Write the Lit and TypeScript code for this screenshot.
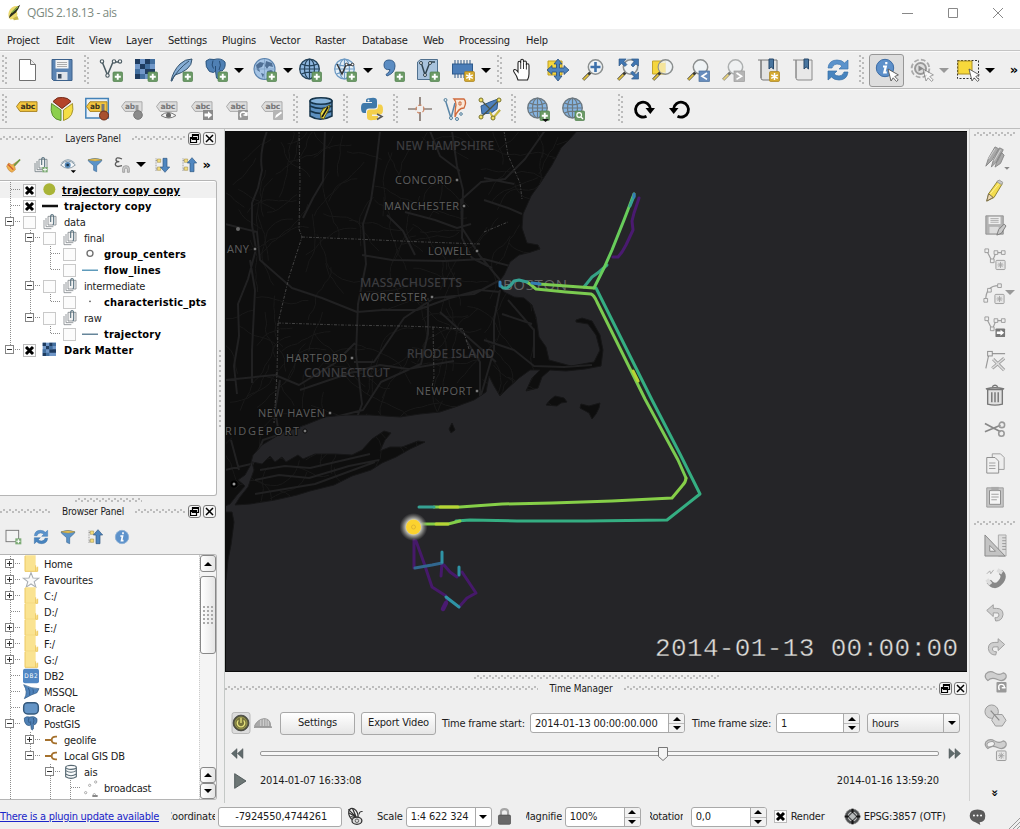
import { LitElement, html, svg, css, nothing } from "lit";
import { customElement, property } from "lit/decorators.js";

/* ---------- icon library: every glyph is drawn on a 24 x 24 grid ---------- */

const plus = svg`<rect x="14" y="14" width="9.5" height="9.5" rx="1" fill="#6b9a66" stroke="#4f7f4c" stroke-width=".7"/><path d="M18.75 15.7v6M15.8 18.75h6" stroke="#fff" stroke-width="1.9"/>`;
const star = svg`<rect x="13.5" y="13.5" width="10" height="10" rx="1.2" fill="#d4a92f" stroke="#a67f1d" stroke-width=".7"/><path d="M18.5 15v7M15.2 16.8l6.6 3.6M15.2 20.3l6.6-3.5" stroke="#fff" stroke-width="1.5"/>`;
const greyStar = svg`<rect x="13" y="13.5" width="10" height="10" rx="1" fill="#e6e6e6" stroke="#9a9a9a"/><path d="M18 15.2v6.6M14.8 18.5h6.4M15.7 16.2l4.6 4.6M20.3 16.2l-4.6 4.6" stroke="#a5a5a5" stroke-width="1"/>`;
const lens = svg`<path d="M9.6 14.2l-7.4 7.6" stroke="#3a3a32" stroke-width="3"/><path d="M7.4 16.6l-5 5" stroke="#e2c243" stroke-width="1.8"/><circle cx="14.5" cy="9" r="7.2" fill="#eef3f6" fill-opacity=".85" stroke="#8b8f8f" stroke-width="1.5"/>`;
const cursor = svg`<path d="M13 11l3 12 2.2-3.2 3.4 3.7 1.6-1.6-3.4-3.4 3.6-1.6z" fill="#fff" stroke="#555" stroke-width=".9"/>`;
const globe = (fill: string, line: string) => svg`<circle cx="11.5" cy="11" r="9.8" fill="${fill}" stroke="${line}" stroke-width="1.3"/><path d="M1.7 11h19.6M11.5 1.2v19.6M3.4 6q8 3.6 16.2 0M3.4 16q8-3.6 16.2 0" stroke="${line}" fill="none" stroke-width="1.2"/><ellipse cx="11.5" cy="11" rx="5" ry="9.8" stroke="${line}" fill="none" stroke-width="1.2"/>`;
const tag = (fill: string, line: string) => svg`<path d="M1.5 9.5L5 4.8h17v9.6H5z" fill="${fill}" stroke="${line}"/>`;
const abc = (x: number, s: string, c: string, y = 12.4) => svg`<text x="${x}" y="${y}" font-size="7.6" font-weight="700" font-family="DejaVu Sans" textLength="${s.length * 4.9}" lengthAdjust="spacingAndGlyphs" fill="${c}">${s}</text>`;
const vee = (c: string) => svg`<path d="M3 3.5L8.5 17 14 4h6" stroke="${c}" stroke-width="1.5" fill="none"/><g fill="#f5f5f5" stroke="${c}" stroke-width="1.1"><circle cx="3" cy="3.4" r="1.7"/><circle cx="8.5" cy="17.5" r="1.7"/><circle cx="15" cy="3.4" r="1.7"/><circle cx="21" cy="3.4" r="1.7"/></g>`;
const elephant = svg`<path d="M2 3q3-3 8-1.5Q17-.5 21 4q1 6-3 9l-2-.5-.5 7q-1.3 2.5-3 .5l-1-7-2 1.5-4-1Q1 9 2 3z" fill="#4f80b4" stroke="#2d567f"/><path d="M9 2.5q-2 5 .5 8M15.5 3q2 4-.5 9M11.5 8v5" stroke="#264c74" stroke-width="1" fill="none"/>`;
const pages = (c: string) => svg`<path d="M3 9v13h11M6 6v13h11" fill="none" stroke="${c}" stroke-width="1.2"/><path d="M9 3.5h12v13H9z" fill="#f2f2f2" stroke="${c}" stroke-width="1.2"/><path d="M13 12V4q0-3 2.200-3T17.500 4v10q0 2-1.500 2" fill="none" stroke="#5a7380" stroke-width="1.7"/>`;
const sync = svg`<path d="M2 10Q3 2 11 2q5 0 7.500 3L22 2v9h-9l3-3Q14 6 11 6 7 6 6 10z" fill="#5b93cc" stroke="#3d76ae" stroke-width=".7"/><path d="M22 14q-1 8-9 8-5 0-7.500-3L2 22v-9h9l-3 3q2 2 5 2 4 0 5-4z" fill="#4784bf" stroke="#356da3" stroke-width=".7"/>`;
const tiles = svg`<rect x="1" y="1" width="20" height="20" fill="#7097c8"/><path d="M1 1h5v5H1zM11 1h5v5h-5zM6 6h5v5H6zM16 11h5v5h-5zM1 16h5v5H1zM11 11h5v5h-5z" fill="#1f3c60"/><path d="M16 1h5v5h-5zM11 6h5v5h-5zM6 16h5v5H6zM1 11h5v5H1z" fill="#426f9f"/>`;
const funnel = svg`<path d="M2 4q10-3.500 20 0v2l-7.500 7v9l-4.500-2v-7L2 6z" fill="#5b93c8" stroke="#3a6a98"/><path d="M2 4.300q10-3.500 20 0-10 3.500-20 0z" fill="#e9c65a" stroke="#a8893a" stroke-width=".8"/>`;
const blob = svg`<path d="M2 4q4-4 9-1t9 0q4 1 3 5-3 5-9 2T4 11Q0 8 2 4z" fill="#cfcfcf" stroke="#9c9c9c" stroke-width="1.200"/>`;
const treeArrow = (up: boolean) => svg`<path d="M3 2v19M3 5h4M3 18h4" stroke="#777" fill="none" stroke-dasharray="1.500 1"/><path d="M5 3h5v5H5zM5 15h5v5H5z" fill="#f3dd7b" stroke="#9d8a45" stroke-width=".8"/><path d="${up ? "M16.500 1l7 8h-4V22h-6V9h-4z" : "M16.500 23l7-8h-4V2h-6v13h-4z"}" fill="#4f86bf" stroke="#2d5680"/>`;

const ICONS: Record<string, unknown> = {
  new: svg`<path d="M4.500 1.500h11l5 5v16h-16z" fill="#fff" stroke="#6f6f6f"/><path d="M15.500 1.500v5h5" fill="#eee" stroke="#6f6f6f"/>`,
  save: svg`<path d="M2 1.500h20v21H3.500L2 21z" fill="#5b84b3" stroke="#3c618b"/><path d="M5.500 2h13v8.500h-13z" fill="#f4f4f4"/><path d="M7 4.500h10M7 6.500h10M7 8.500h10" stroke="#999" stroke-width=".8"/><path d="M6.500 14h11v8h-11z" fill="#dfe4ea"/><path d="M8 16h3.500v4.500H8z" fill="#3b4c60"/>`,
  vector: svg`${vee("#4b5b62")}${plus}`,
  raster: svg`${tiles}${plus}`,
  feather: svg`<path d="M2 23Q4 13 11 6q5-5 12-5 0 6-5 10T6 17q-2 2-3 6z" fill="#86add4" stroke="#35536e"/><path d="M3 22Q9 11 20 3" stroke="#35536e" fill="none"/>${plus}`,
  pg: svg`${elephant}${plus}`,
  wms: svg`<circle cx="11.500" cy="11" r="10.500" fill="#a5c4e5" stroke="#5a82ad" stroke-width="1.200"/><path d="M3 7l4-3 4 1-2 4-3 1 1 4-3-2zM13 3l6 2 1 4-4-1-2 3-2-3zM14 13l4-1 2 1-3 5-2-1zM8 15l3 1-1 4z" fill="#4f6f95"/><path d="M1.500 11h20M11.500 1v20" stroke="#7fa2c7" stroke-width=".8"/>${plus}`,
  wcs: svg`${globe("#8fb7df", "#24425a")}${plus}`,
  wfs: svg`${globe("#e6f0f8", "#6f9bc4")}<path d="M4 6l5 10 4-9h7" stroke="#333" stroke-width="1.400" fill="none"/><circle cx="13.500" cy="6.500" r="1.300" fill="#fff" stroke="#333"/><circle cx="19.500" cy="6.500" r="1.300" fill="#fff" stroke="#333"/>${plus}`,
  comma: svg`<path d="M3 7q0-5 5-5 6 0 6 6 0 7-8 10l-1-1.500q4-2.500 4-5-6 1-6-4.500z" fill="#5b8cc2" stroke="#335c8b"/>${plus}`,
  virtual: svg`<path d="M1.500 4l3-2.500h17v17l-2 3h-18z" fill="#a9c3dd" stroke="#50708e"/><path d="M5 4l4 13 5-13h5" fill="none" stroke="#31444f" stroke-width="1.500"/><circle cx="5" cy="5" r="1.500" fill="#eee" stroke="#31444f"/><circle cx="9" cy="17" r="1.500" fill="#eee" stroke="#31444f"/><circle cx="14" cy="5" r="1.500" fill="#eee" stroke="#31444f"/>${plus}`,
  memory: svg`<path d="M4 2v18M7 2v18M10 2v18M13 2v18M16 2v18M19 2v18" stroke="#5c7a9c" stroke-width="1.300"/><rect x="1.500" y="6" width="20" height="10" fill="#4b7db8" stroke="#2e5a8c"/>${star}`,
  hand: svg`<path d="M7 22q-1-4-4-8-1-2 .5-2.500T7 14V5q0-1.700 1.300-1.700T9.700 5V3q0-1.700 1.400-1.700T12.500 3v1.500Q12.500 3 14 3t1.400 2v2q0-1.300 1.300-1.300T18 7.500V16q0 3-1.500 6z" fill="#fff" stroke="#222" stroke-width="1.100"/><path d="M9.700 5v6M12.500 4.500v6.500M15.400 6v5.500" stroke="#222" stroke-width=".9"/>`,
  pan: svg`<path d="M2 3h14v14H2z" fill="#f5d63d" stroke="#c09e22"/><path d="M12 1l4 5h-2.500v4H18V7.500l5 4.500-5 4.500V14h-4.500v4H16l-4 5-4-5h2.500v-4H6v2.500L1 12l5-4.500V10h4.500V6H8z" fill="#4e83bd" stroke="#284f7c" stroke-width=".8"/>`,
  zoomIn: svg`${lens}<path d="M14.500 4v10M9.500 9h10" stroke="#3c70ab" stroke-width="2.600"/>`,
  zoomFull: svg`<path d="M3 1h19v20h-6" fill="none" stroke="#d9e4ee" stroke-width="2"/>${lens}<path d="M3 1h7L8 3.500l3 3-2 2-3.500-3L3 8zM22.500 1v7L20 6l-3 3-2-2 3-3.500L15.500 1zM22.500 21h-7l2.500-2.500-3.500-3.500 2-2 3.500 3.500 2.500-2.500z" fill="#3f76b1" stroke="#2b527c" stroke-width=".6"/>`,
  zoomSel: svg`<path d="M1.500 3h13v13h-13z" fill="#f5d63d" stroke="#c4a42b"/>${lens}<path d="M9 5h5.500v9.500H10q-4-4-1-9.500z" fill="#f5e59c"/>`,
  zoomLast: svg`${lens}<rect x="13" y="13" width="10.500" height="10.500" fill="#688dbd" stroke="#4a6f9c" stroke-width=".7"/><path d="M21 15l-5 3.200 5 3.200" fill="none" stroke="#fff" stroke-width="1.700"/>`,
  zoomNext: svg`<g opacity=".65">${lens}</g><rect x="13" y="13" width="10.500" height="10.500" fill="#b5b5b5" stroke="#999" stroke-width=".7"/><path d="M15.500 15l5 3.200-5 3.200" fill="none" stroke="#fff" stroke-width="1.700"/>`,
  bookNew: svg`<path d="M2 2h3v18q0 2 2 2h14V2H5" fill="#e3e3e3" stroke="#777"/><path d="M5 20V2" stroke="#777"/><path d="M13 1h4.500v10L15.200 9 13 11z" fill="#49759f" stroke="#28496b"/>${star}`,
  book: svg`<path d="M2 2h3v18q0 2 2 2h14V2H5" fill="#e8e8e8" stroke="#8a8a8a"/><path d="M5 20V2" stroke="#8a8a8a"/><path d="M13 1h4.500v10L15.200 9 13 11z" fill="#49759f" stroke="#28496b"/>`,
  sync,
  identify: svg`<circle cx="10" cy="10" r="8.700" fill="#5d90ca" stroke="#3c6ca5"/><path d="M11.300 4v2.200M8 8.500h2.800l-1.500 6h2.500" stroke="#fff" stroke-width="2.200" fill="none"/>${cursor}`,
  action: svg`<circle cx="10.500" cy="10.500" r="8.500" fill="#e9e9e9" stroke="#aaa" stroke-width="2.600" stroke-dasharray="4.500 2.200"/><circle cx="10.500" cy="10.500" r="8" fill="#eee"/><circle cx="10.500" cy="10.500" r="5.500" fill="#ddd" stroke="#999" stroke-width="2"/><path d="M8.500 7.500v6l5-3z" fill="#888"/><g opacity=".6">${cursor}</g>`,
  select: svg`<rect x="1.500" y="2.500" width="21" height="18" fill="none" stroke="#333" stroke-dasharray="2 1.500"/><path d="M2 3h14v13H2z" fill="#f7d83b" stroke="#a88d25"/>${cursor}`,
  label: svg`${tag("#f3c63e", "#a98322")}${abc(5.500, "abc", "#3b3420")}`,
  pie: svg`<path d="M12 11.500L3 4.500Q7-.5 12.500.5 18 .5 21 4.500z" fill="#b4442a" stroke="#732b1a"/><path d="M11 13v10.500Q-1 22 1.500 6.500z" fill="#8ccf4d" stroke="#5c8e35"/><path d="M13.500 13v10.500Q25 20 22.500 6.500z" fill="#f5de45" stroke="#a6942f"/>`,
  labelPin: svg`<rect x=".8" y="1.500" width="22.500" height="19.500" fill="#ecf2f8" stroke="#4382b8" stroke-width="1.500"/>${tag("#f3c63e", "#a98322")}${abc(5, "ab", "#3b3420")}<path d="M18 7v9" stroke="#777" stroke-width="3"/><circle cx="19" cy="18.500" r="4.500" fill="#a8502e" stroke="#6d2f18"/>`,
  labelGrey: svg`${tag("#ddd", "#aaa")}${abc(5, "ab", "#777")}<path d="M17 8v8" stroke="#999" stroke-width="3"/><circle cx="18" cy="18" r="4.300" fill="#8b8b8b" stroke="#777"/>`,
  labelEye: svg`${tag("#ddd", "#aaa")}${abc(5.500, "abc", "#777")}<path d="M6 18.500q7-6 15 0-7 5-15 0z" fill="#f4f4f4" stroke="#777"/><circle cx="13.500" cy="18.300" r="2.500" fill="#666"/>`,
  labelMove: svg`${tag("#ddd", "#aaa")}${abc(5.500, "abc", "#777")}<rect x="13" y="13" width="10" height="10" fill="#8b8b8b"/><path d="M14.500 16.500h3.500v-2.300l4.200 3.800-4.200 3.800v-2.300h-3.500z" fill="#fff"/>`,
  labelRotate: svg`${tag("#ddd", "#aaa")}${abc(5.500, "abc", "#777")}<rect x="13" y="13" width="10" height="10" rx="1" fill="#999"/><path d="M16 20.500q-2-5 2-5.500 3.500 0 3 4M18.500 18h3.500v-3" fill="none" stroke="#fff" stroke-width="1.400"/>`,
  labelEdit: svg`${tag("#ddd", "#aaa")}${abc(5.500, "abc", "#777")}<rect x="13" y="13" width="10" height="10" rx="1" fill="#b5b5b5"/><path d="M15 21l1-3 5-3.500 1 1.500-5 4z" fill="#fff"/>`,
  database: svg`<path d="M1 4v15q10 6.500 22 0V4z" fill="#5c8fbe" stroke="#16354b" stroke-width="1.500"/><path d="M1 9q11 5 22 0M1 14q11 5 22 0" stroke="#16354b" stroke-width="1.600" fill="none"/><ellipse cx="12" cy="4" rx="11" ry="3.200" fill="#86b3da" stroke="#16354b" stroke-width="1.500"/><path d="M12 21q-2-5 2-9l7-4q-1 5-3 8t-3 6z" fill="#e8d843" stroke="#5f5a1d"/><path d="M13 20l6-10" stroke="#111" stroke-width="1.500"/>`,
  python: svg`<path d="M11 1q6-1 6 3v5q0 2.500-3 2.500H9q-3 0-3 3v1.500H4q-3 0-3-5t3-5h8V5H6V3q0-2 5-2z" fill="#3f79aa"/><path d="M13 23q-6 1-6-3v-5q0-2.500 3-2.500h5q3 0 3-3V7.500h2q3 0 3 5t-3 5h-8V19h6v2q0 2-5 2z" fill="#f3cf4b"/><circle cx="8.500" cy="3.500" r="1" fill="#fff"/><path d="M17 17l5 2.500-5 3" fill="none" stroke="#555" stroke-width="1.500"/>`,
  cross: svg`<path d="M12 0v9M12 15v9M0 12h9M15 12h9" stroke="#5c4a40" stroke-width="1.200"/><circle cx="12" cy="12" r="4" fill="none" stroke="#cf8866" stroke-width="1.200" stroke-dasharray="3.500 2"/>`,
  topo: svg`<path d="M2 2l6 19L12 6" fill="none" stroke="#5a86a8" stroke-width="1.500"/><path d="M11 2h10q3 3 0 9-6 0-9 9 0-8 1-12 0-4-2-6z" fill="#fae8d8" stroke="#cf6a3c" stroke-width="1.300"/><path d="M16 5h2v3h-2z" stroke="#cf6a3c" fill="none"/><g fill="#dfe9ef" stroke="#55809c"><circle cx="2.500" cy="3" r="1.500"/><circle cx="8" cy="21" r="1.500"/><circle cx="14" cy="22" r="1.500"/><circle cx="18" cy="17" r="1.300"/></g>`,
  georef: svg`<path d="M3 9l9-4 8-3-1 10-6 4-9 1z" fill="#4c7fbd" stroke="#2b5588"/><path d="M3 3l9 9M3 20l9-8 9-9M15 21l7-8" stroke="#4d5543" stroke-width="1.200"/><path d="M12 15l3 6 7-8" fill="none" stroke="#c9b83f" stroke-width="2"/><g fill="#f1df62" stroke="#77712b"><circle cx="3" cy="3" r="2"/><circle cx="21" cy="3" r="2"/><circle cx="3" cy="20" r="2"/><circle cx="15" cy="21" r="2"/></g>`,
  webAdd: svg`${globe("#86b5e2", "#6c7880")}${plus}<path d="M16 22h7l-3.500 3z" fill="#111"/>`,
  webFind: svg`${globe("#86b5e2", "#6c7880")}<rect x="14" y="14" width="9.500" height="9.500" rx="1" fill="#6b9a66" stroke="#4f7f4c" stroke-width=".7"/><circle cx="18.200" cy="18" r="2.300" fill="none" stroke="#fff" stroke-width="1.200"/><path d="M20 20l2 2" stroke="#fff" stroke-width="1.300"/>`,
  redo: svg`<path d="M14.500 19.300A7.500 7.500 0 1 1 18.500 12" fill="none" stroke="#000" stroke-width="2.800"/><path d="M13.500 11h9.500l-4.700 6z"/>`,
  undo: svg`<path d="M10.500 19.300A7.500 7.500 0 1 0 6.500 12" fill="none" stroke="#000" stroke-width="2.800"/><path d="M11.500 11H2l4.700 6z"/>`,
  brush: svg`<path d="M4 9l5 3 12-8-8 10 1 5-5 4q-6-2-8-9z" fill="#f0b44e" stroke="#c8823a"/><path d="M12 13l9-9" stroke="#6c9a4a" stroke-width="2.500"/><path d="M3 11l8 8" stroke="#cf5a35" stroke-width="2"/>`,
  group: svg`${pages("#6f7b80")}<rect x="14" y="15" width="8" height="8" fill="#79a871"/><path d="M18 16v6M15 19h6" stroke="#fff" stroke-width="1.500"/>`,
  pages: pages("#7d8488"),
  eye: svg`<path d="M1 12q11-12 22 0-11 10-22 0z" fill="#f5f8fa" stroke="#7c8f9d" stroke-width="1.300"/><path d="M2 9q10-10 20 0" stroke="#8ba0ae" fill="none" stroke-width="1.500"/><circle cx="11.500" cy="12" r="4.500" fill="#5688b8"/><circle cx="11.500" cy="12" r="2" fill="#1c3448"/><path d="M16 20h8l-4 4z"/>`,
  funnel,
  epsilon: svg`<path d="M12 3Q3-1 3 4q0 3 5 3-6 0-6 4.500Q3 16 12 13" fill="none" stroke="#5a5a5a" stroke-width="2"/><path d="M13 23v-6q0-4 5-4t5 4v6h-3v-5q0-1.500-2-1.500T16 18v5z" fill="#ccc" stroke="#888"/>`,
  expand: treeArrow(false),
  collapse: treeArrow(true),
  addSel: svg`<rect x="0" y="2" width="19" height="17" fill="#f4f4f4" stroke="#777" stroke-width="1.400"/><rect x="14" y="14" width="9" height="9" fill="#7dab76"/><path d="M18.500 15.500v6M15.500 18.500h6" stroke="#fff" stroke-width="1.600"/>`,
  info: svg`<circle cx="12" cy="12" r="10" fill="#5d92cb" stroke="#8fb2d6" stroke-width="1.500"/><path d="M13.500 5v3M9.500 10.500h3.300l-1.500 7h3" stroke="#fff" stroke-width="2.500" fill="none"/>`,
  folder: svg`<path d="M3-1h16v18h3v6H3z" fill="#fae391"/><path d="M19 14v9M22 16v7H3V0" stroke="#ecc862" fill="none" stroke-width="1.500"/>`,
  starIcon: svg`<path d="M12 1l3 8 8.500.3-6.700 5.200 2.400 8.200L12 18l-7.200 4.700 2.400-8.200L.5 9.300 9 9z" fill="#fafafa" stroke="#a8adb2" stroke-width="1.600"/>`,
  db2: svg`<rect x="0" y="1" width="24" height="22" rx="3" fill="#5187c3"/><text x="2" y="15.500" font-size="9.500" letter-spacing="0" font-family="DejaVu Sans" textLength="20" fill="#fff">DB2</text>`,
  mssql: svg`<path d="M1 1q11 6 23 6l-3 6Q12 16 2 22q6-10-1-21z" fill="#4f83ba" stroke="#315b85"/><path d="M8 6q3 4 2 11M15 8q1 4 0 6" stroke="#284d78" fill="none"/>`,
  oracle: svg`<rect x="1" y="4" width="22" height="17" rx="6" fill="#6595c6" stroke="#35597c" stroke-width="2.200"/>`,
  elephant,
  link: svg`<path d="M3 12h9M21 7q-8-1-8 5t8 5" fill="none" stroke="#a5712d" stroke-width="2.800"/>`,
  cylinder: svg`<path d="M4 5v14q8 5 16 0V5" fill="#f8fafb" stroke="#566872" stroke-width="1.700"/><path d="M4 10q8 5 16 0M4 15q8 5 16 0" stroke="#566872" fill="none" stroke-width="1.600"/><ellipse cx="12" cy="5" rx="8" ry="3" fill="#fff" stroke="#566872" stroke-width="1.700"/>`,
  points: svg`<g fill="#fff" stroke="#888"><circle cx="19" cy="3" r="1.700"/><circle cx="10" cy="8" r="1.700"/><circle cx="4" cy="19" r="1.700"/><circle cx="17" cy="22" r="1.700"/></g>`,
  pointsTop: svg`<path d="M14 0h8" stroke="#888" stroke-width="3"/>`,
  dot: svg`<circle cx="11" cy="11" r="9" fill="#a9b437"/>`,
  thick: svg`<path d="M0 12h24" stroke="#111" stroke-width="3.500"/>`,
  ring: svg`<circle cx="12" cy="11" r="4.500" fill="#fff" stroke="#707070" stroke-width="2"/>`,
  blueLine: svg`<path d="M0 12.500h24" stroke="#5e9bbb" stroke-width="2.200"/>`,
  slateLine: svg`<path d="M0 12.500h24" stroke="#66859a" stroke-width="2.200"/>`,
  speck: svg`<circle cx="12" cy="11" r="1.300" fill="#555"/>`,
  tiles,
  pencils: svg`<path d="M2 22l3-9L12 1l4 2-7 12zM8 23l2-7L17 2l4 2-6 12zM12 23l3-9 4-7 3 3-4 9z" fill="#a9a9a9" stroke="#868686"/><path d="M5 14l7-11M11 16l7-12" stroke="#d5d5d5"/><path d="M22 23h6l-3 3z" fill="#888"/>`,
  pencil: svg`<path d="M3 23l2-8L15 1l5 3-9 15z" fill="#f3dc4e" stroke="#85792f"/><path d="M3 23l2-8 5 4z" fill="#ead6b0" stroke="#776a4a"/><path d="M7 15L17 3" stroke="#fff3a4"/><path d="M14 2l5 3 1.500-2.500-4-2.500z" fill="#c8c8c8" stroke="#999"/>`,
  saveGrey: svg`<path d="M2 2h19v20H2z" fill="#b3b3b3" stroke="#909090"/><path d="M5 3h13v8H5z" fill="#eee"/><path d="M7 5h9M7 7h9M7 9h9" stroke="#aaa"/><path d="M6 14h10v7H6z" fill="#ddd"/><path d="M14 23l2-6 6-6 2 2-5 8z" fill="#c9c9c9" stroke="#777"/>`,
  addFeat: svg`<path d="M3 3l6 12 4-10h7" stroke="#a0a0a0" fill="none" stroke-width="1.300"/><g fill="#eee" stroke="#999"><path d="M1 1h4v4H1zM7 12h4v4H7zM11 3h4v4h-4zM19 3h4v4h-4z"/></g>${greyStar}`,
  curve: svg`<path d="M3 20Q3 4 17 4" stroke="#a0a0a0" fill="none" stroke-width="1.300"/><g fill="#eee" stroke="#999"><path d="M1 18h4v4H1zM5 7h4v4H5zM16 2h4v4h-4z"/></g>${greyStar}`,
  moveFeat: svg`<path d="M3 3l6 12 4-10h7" stroke="#a0a0a0" fill="none" stroke-width="1.300"/><g fill="#eee" stroke="#999"><path d="M1 1h4v4H1zM7 12h4v4H7zM11 3h4v4h-4zM19 3h4v4h-4z"/></g><rect x="12.500" y="13.500" width="10.500" height="9.500" rx="1" fill="#777"/><path d="M14 17h4v-2l4 3.300-4 3.300v-2h-4z" fill="#fff"/>`,
  node: svg`<path d="M7 4h16M5 6L2 20" stroke="#999" stroke-width="1.300"/><rect x="4" y="1.500" width="5" height="5" fill="#eee" stroke="#888"/><path d="M10 10l12 12M22 9L9 20" stroke="#a0a0a0" stroke-width="3.400"/><path d="M10 10l12 12M22 9L9 20" stroke="#dedede" stroke-width="1.500"/>`,
  trash: svg`<path d="M4 6h16v16q-8 2-16 0z" fill="#e1e1e1" stroke="#777" stroke-width="1.500"/><path d="M2 5.500q10-3 20 0M9 3q3-3 6 0M8.500 9v11M12 9v11M15.500 9v11" fill="none" stroke="#777" stroke-width="1.600"/>`,
  scissors: svg`<path d="M1 6l17 9M1 15l17-7" stroke="#888" stroke-width="1.800"/><circle cx="19.500" cy="7.500" r="3" fill="none" stroke="#999" stroke-width="1.700"/><circle cx="19" cy="17" r="3" fill="none" stroke="#999" stroke-width="1.700"/>`,
  copy: svg`<path d="M9 2h9l4 4v13H9z" fill="#eee" stroke="#999"/><path d="M3 6h9l4 4v13H3z" fill="#f0f0f0" stroke="#888"/><path d="M5.500 12h7M5.500 15h7M5.500 18h7" stroke="#999"/>`,
  paste: svg`<path d="M3 2h18v21H3z" fill="#c6c6c6" stroke="#999"/><path d="M6 5h12v15H6z" fill="#f4f4f4" stroke="#888"/><path d="M8 1h8v4H8z" fill="#aaa"/><path d="M8 9h8M8 12h8M8 15h6" stroke="#999"/>`,
  ruler: svg`<path d="M15 1h8v22h-8z" fill="#ddd" stroke="#aaa"/><path d="M1 1l21 22H1z" fill="#c3c3c3" stroke="#888"/><path d="M6 12l6 6H6z" fill="#f0f0f0" stroke="#888"/><path d="M19 4h4M19 7h4M19 10h4M19 13h4M19 16h4" stroke="#999"/>`,
  magnet: svg`<path d="M5 14q6 8 12 1t0-11" fill="none" stroke="#888" stroke-width="5.500"/><path d="M3 12l4 5M14 2l5 3" stroke="#ddd" stroke-width="4"/><path d="M3 6l3-3 1 3 3-4" stroke="#aaa" fill="none"/>`,
  undoGrey: svg`<path d="M1 8l8-7v4.500h4q8 0 8 7.500-1 8-9 8l-1-4q5 0 5-3.500T12 11H9v4.500z" fill="#cfcfcf" stroke="#9e9e9e" stroke-width="1.200" transform="translate(2 2) scale(.85)"/>`,
  redoGrey: svg`<path d="M23 8l-8-7v4.500h-4q-8 0-8 7.500 1 8 9 8l1-4q-5 0-5-3.500T12 11h3v4.500z" fill="#cfcfcf" stroke="#9e9e9e" stroke-width="1.200" transform="translate(2 2) scale(.85)"/>`,
  rotateFeat: svg`${blob}<rect x="13" y="12.500" width="10.500" height="11" rx="1" fill="#999"/><path d="M16 21q-2-6 2-6t3 4M18.500 18.500h4" fill="none" stroke="#fff" stroke-width="1.500"/>`,
  simplify: svg`<circle cx="8" cy="8" r="7" fill="#d0d0d0" stroke="#999"/><path d="M11 11h8l4 6-4 6h-7l-4-6z" fill="#d6d6d6" stroke="#999"/><path d="M7 7l9 10" stroke="#888" stroke-width="1.200"/>`,
  addRing: svg`${blob}<ellipse cx="7" cy="6.500" rx="4" ry="2.600" fill="#f3f3f3" stroke="#999" transform="rotate(-20 7 6.500)"/>${greyStar}`,
  power: svg`<rect x="0" y="-2" width="24" height="28" rx="3" fill="#dcdcdc" stroke="#aaa"/><circle cx="12" cy="12" r="10.500" fill="#54563c" stroke="#333"/><circle cx="12" cy="12" r="8" fill="#77743b" stroke="#a8a457"/><path d="M8.500 8.500a5 5 0 1 0 7 0M12 5v7" fill="none" stroke="#e6e27c" stroke-width="1.800"/>`,
  museum: svg`<path d="M1 15q4-8 13-9 8 1 8 9v2H1z" fill="#a9a9a9" stroke="#8c8c8c"/><path d="M9 8v8M12.500 7v9M16 7v9M19 9v7" stroke="#e2e2e2"/><path d="M0 17.500h24" stroke="#999" stroke-width="2"/>`,
  rewind: svg`<path d="M11 3v18L1 12zM22 3v18l-10-9z" fill="#606b6c" stroke="#434b4c"/>`,
  forward: svg`<path d="M2 3v18l10-9zM13 3v18l10-9z" fill="#606b6c" stroke="#434b4c"/>`,
  play: svg`<path d="M4 1l17 11L4 23z" fill="#6d7675" stroke="#475051" stroke-width="1.300"/>`,
  mouse: svg`<ellipse cx="9" cy="9" rx="6" ry="9" fill="#f4f4f4" stroke="#333" stroke-width="1.800" transform="rotate(-25 9 9)"/><path d="M3 7l10 6M2 2l12 12M8 1l5 12M5 12l8 2" stroke="#333" stroke-width="1.800"/><ellipse cx="14" cy="18" rx="7" ry="5" fill="#ddd" stroke="#333" stroke-width="1.800"/><circle cx="14" cy="18" r="2.500" fill="none" stroke="#333"/><path d="M17 9q1-5 5-4" stroke="#333" stroke-width="1.500" fill="none"/>`,
  lock: svg`<path d="M7 11V5.500q0-4 5-4t5 4V11" fill="none" stroke="#a5a5a5" stroke-width="3"/><rect x="3.500" y="10" width="17" height="13" rx="1.500" fill="#686868" stroke="#4d4d4d"/>`,
  crs: svg`<circle cx="12" cy="12" r="10.500" fill="#4c4f50" stroke="#8a8a8a"/><circle cx="12" cy="12" r="6" fill="none" stroke="#ccc" stroke-width="1.500"/><path d="M12 1v6M12 17v6M1 12h6M17 12h6" stroke="#151515" stroke-width="3"/><path d="M12 7l5 5-5 5-5-5z" fill="#b9bcbc"/>`,
  bubble: svg`<path d="M12 2q11 0 11 9t-8 9l1 4-7-4Q1 18 1 11q0-9 11-9z" fill="#5b5b5b"/><circle cx="7" cy="10.500" r="1.400" fill="#fff"/><circle cx="12" cy="10.500" r="1.400" fill="#fff"/><circle cx="17" cy="10.500" r="1.400" fill="#fff"/>`,
  qgis: svg`<path d="M6 22Q2 18 4 11q3-9 14-8-1 4-3 7 3 6-2 11z" fill="#ecd96c"/><path d="M10 20l1 3 7-1-2-5z" fill="#c6b64c"/><path d="M4 20q2-10 16-19-2 6-6 11z" fill="#2b2f22"/><path d="M8 12l9-8" stroke="#96c04c" stroke-width="1.500"/>`,
};

@customElement("q-icon")
class QIcon extends LitElement {
  @property() name = "";
  @property({ type: Number }) size = 24;
  static styles = css`
    :host { display: inline-flex; flex: none; }
    svg { display: block; overflow: visible; }
  `;
  render() {
    return html`<svg width=${this.size} height=${this.size} viewBox="0 0 24 24">${ICONS[this.name] ?? nothing}</svg>`;
  }
}

/* ---------- map canvas ---------- */

function seeded(seed: number) {
  let s = seed;
  return () => ((s = (s * 16807) % 2147483647) / 2147483647);
}

function minorRoads(count: number) {
  const rnd = seeded(4711);
  const out: string[] = [];
  for (let i = 0; i < count; i++) {
    let x = 225 + rnd() * 340;
    let y = 131 + rnd() * 360;
    let a = rnd() * 6.283;
    let d = `M${x.toFixed(1)} ${y.toFixed(1)}`;
    const n = 5 + Math.floor(rnd() * 9);
    for (let k = 0; k < n; k++) {
      a += (rnd() - 0.5) * 0.9;
      x += Math.cos(a) * 6;
      y += Math.sin(a) * 6;
      d += `L${x.toFixed(1)} ${y.toFixed(1)}`;
    }
    out.push(d);
  }
  return out.join("");
}

const LAND = [
  "M225 131H577L568 141 561 148 552 165 541 182 531 196 523 214 522 228 527 243 538 245 540 249 531 252 519 255 510 262 504 275 498 283 504 292 514 297 524 298 532 305 536 317 539 337 546 347 549 360 571 366 594 362 600 350 596 335 588 324 576 322 576 320 582 318 592 321 600 335 603 350 601 366 585 369 566 371 550 370 542 377 538 388 526 391 532 378 540 370 530 370 519 378 508 388 500 396 494 386 489 376 486 392 474 400 455 407 440 412 420 414 400 417 370 415 345 415 325 417 305 425 280 434 262 445 253 455 250 466 245 475 238 480 245 486 237 495 230 504 225 506Z",
  "M254 470L252 462 262 464 270 456 275 462 282 457 286 462 298 455 303 459 315 454 335 454 352 455 362 450 372 439 384 431 391 433 385 440 380 451 390 447 402 447 418 441 425 442 410 449 396 457 382 463 371 470 352 476 334 485 310 491 297 495 275 500 250 504 235 505 240 497 248 487Z",
  "M225 512H232L234 522 231 545 228 560 226 580 225 580Z",
  "M449 429l3-6 3 7-4 3zM546 405l4-5 5-4 9 2 3 4-6 1-4 3zM581 404l8 2 11-3-1 5-3 6-4 5-3-6-9-5z",
];

const ROADS =
  "M267 131q-8 22-5 39l-4 18-6 15 0 22 4 24-8 30-10 25 1 32-5 30 3 28M325 131l-2 50-10 17-10 20M380 131l-4 35-5 34-8 24 3 40-8 40-2 50 6 50-12 32M405 212l30 8 22 8 14-4M387 215l16 16 12 24M225 224l32 8 3 28 32 28 30 10 35 14 25-2 35 0 33-12 30-8 20 2M362 255l30 5 52 1 40-2 30 8M430 131l10 25 20 15M452 131l5 35 6 24-1 48 10 20 20 10M500 280l-20-24-18-28-1-28 20-18 24-3 20-20 28-40M500 280l-26 14-40 4-30 20-30 44-20 0M500 290l-6 30 0 30-13 45M508 300l26 30 0 28M502 314l30 10M484 340l30 10 20 16 30 1 28-2M428 298l0 36-7 30-40 18-18 28-40 10-60 20-18 42M440 312l22 20 34 30M250 260l5 30-3 60 0 33M300 390l50-17 30-8 28 4 46-8M225 380l50-5 24 10 36-22 20-20M280 440l-5-30 5-30M466 340l14 22 0 40M260 470l25-4 25 2 60-14M255 480l24-5 30 3 40-12 30-6M255 494l60-10 60-22M231 440l8 30M225 470l26-6M484 178l30 6M484 200l24 8 14 6";

const BORDERS =
  "M299 131l1 50-1 48 3 8-13 40-11 46-1 50-3 50M302 237l52 2 70 3 56 2M278 323l64 2 60 1 30 1 31 2 6 20M433 327l1 50-2 10M504 131l4 24 12 28 2 16M484 232l24-10";

const CITIES: [string, number, number, number, number, number][] = [
  ["CONCORD", 395, 184, 57, 457, 180],
  ["MANCHESTER", 384, 210, 75, 464, 206],
  ["LOWELL", 428, 255, 43, 477, 251],
  ["WORCESTER", 360, 301, 67, 432, 297],
  ["HARTFORD", 286, 362, 61, 352, 358],
  ["NEWPORT", 416, 395, 56, 477, 391],
  ["NEW HAVEN", 258, 417, 67, 330, 413],
  ["ANY", 227, 253, 22, 255, 249],
  ["RIDGEPORT", 225, 435, 74, 305, 431],
];

const STATES: [string, number, number, number][] = [
  ["NEW HAMPSHIRE", 396, 150, 98],
  ["MASSACHUSETTS", 360, 287, 102],
  ["RHODE ISLAND", 407, 358, 87],
  ["CONNECTICUT", 304, 377, 86],
];

const TRACKS: [string, string, number?][] = [
  ["#4a1a70", "M639 198l-5 15-2 8 1 9-7 15-4 7-4 5-5 0"],
  ["#46196a", "M414 540V568M416 541l8 22 8 24 14 9 1 4M442 563l-1 13M444 565l6 7 7 5M462 572l6 9 8 12-9 5-8 9"],
  ["#4a1a70", "M446 603l-3 6", 4.5],
  ["#31678e", "M415 568l17-3 10-2"],
  ["#2f93a5", "M442 552v10M459 567v8M446 597l13 10"],
  ["#36a285", "M607 265l-8 7-7 5-8 10"],
  ["#35ae82", "M596 288l56 112 28 54 20 40-33 26-80 1-70 0-47-1-14 1"],
  ["#7bcb50", "M539 284l27 2 28 2"],
  ["#7bcb50", "M527 282l3 2 6 5 30 3 25 2q3 1 6 8l48 97 33 61 8 18"],
  ["#84ce49", "M460 521l-8 2-4 1h-26"],
  ["#86cf48", "M686 478q0 4-4 8l-10 12-60 3-60 2-50 1-42 3h-26"],
  ["#68cd5b", "M634 194l-10 26-12 30-8 18-10 20"],
  ["#36a193", "M501 286l2 2 4 0 4-3 3-4 5-1 8 2M419 507h15M634 196l-4 10"],
  ["#b8d434", "M440 507h18M633 371l5 10M436 524h12"],
  ["#347db4", "M500 282v4M532 283l8 1M634 194v3"],
];

@customElement("map-canvas")
class MapCanvas extends LitElement {
  static styles = css`
    :host { display: block; width: 742px; height: 541px; background: #252528; letter-spacing: 0; }
    svg { display: block; }
    .city { font: 11px "Open Sans", sans-serif; fill: #5e5e5e; paint-order: stroke; stroke: #0d0d0d; stroke-width: 2px; }
    .state { font: 500 13px "Noto Sans", sans-serif; fill: #3b3b3e; }
    .boston { font: 15px "Open Sans", sans-serif; fill: #666; }
    .clock { font: 26px "Liberation Mono", monospace; fill: #dddcd8; stroke: #252528; stroke-width: .35px; }
  `;
  render() {
    return html`<svg width="742" height="541" viewBox="225 131 742 541">
      <defs>
        <clipPath id="land"><path d=${LAND.join("")}></path></clipPath>
        <radialGradient id="glow"><stop offset=".5" stop-color="#dcdcd0"></stop><stop offset=".75" stop-color="#90908c" stop-opacity=".7"></stop><stop offset="1" stop-color="#777" stop-opacity="0"></stop></radialGradient>
      </defs>
      <path d=${LAND.join("")} fill="#0e0e0e" stroke="#161617" stroke-width="1"></path>
      <g clip-path="url(#land)" fill="none" stroke-linejoin="round">
        <path d=${minorRoads(180)} stroke="#191919" stroke-width="1"></path>
        <path d=${ROADS} stroke="#212122" stroke-width="2"></path>
        <path d=${BORDERS} stroke="#444" stroke-width="1" stroke-dasharray="3 1.500 1 1.500"></path>
      </g>
      ${STATES.map(([t, x, y, w]) => svg`<text class="state" x=${x} y=${y} textLength=${w} lengthAdjust="spacingAndGlyphs">${t}</text>`)}
      ${CITIES.map(([t, x, y, w, cx, cy]) => svg`<text class="city" x=${x} y=${y} textLength=${w}>${t}</text><circle cx=${cx} cy=${cy} r="2" fill="#777" stroke="#090909"></circle>`)}
      <circle cx="238" cy="229" r="2" fill="#666"></circle><circle cx="234" cy="484" r="2.500" fill="#999" stroke="#000" stroke-width="2"></circle>
      <text class="boston" x="503" y="290" textLength="64">BOSTON</text>
      ${TRACKS.map(([c, d, w]) => svg`<path d=${d} fill="none" stroke=${c} stroke-width=${w ?? 3} stroke-linecap="round" stroke-linejoin="round"></path>`)}
      <circle cx="413.500" cy="527" r="14" fill="url(#glow)"></circle>
      <circle cx="413.500" cy="527" r="7.500" fill="#fbd22f"></circle><circle cx="413.500" cy="527" r="2" fill="none" stroke="#e0b530"></circle>
      <text class="clock" x="655" y="656" textLength="303">2014-01-13 00:00:00</text>
      <path d="M225.500 672V131.500H967M225 671.500h742" fill="none" stroke="#0b0b0b"></path>
    </svg>`;
  }
}

/* ---------- data ---------- */

type Slot = [string, number];
const S = (names: string): Slot[] => names.split(" ").map((n) => [n, 35]);

const BAR1: Slot[] = [
  ["|", 9.5], ...S("new save"), ["|", 14], ...S("vector raster feather pg"), ["v", 14], ...S("wms"), ["v", 10],
  ...S("wcs wfs"), ["v", 13], ...S("comma virtual memory"), ["v", 14], ["|", 11],
  ...S("hand pan zoomIn zoomFull zoomSel zoomLast zoomNext bookNew book sync"), ["|", 13.5],
  ...S("identify action"), ["g", 11], ...S("select"), ["v", 12],
];
const BAR2: Slot[] = [
  ["|", 9.5], ...S("label pie labelPin labelGrey labelEye labelMove labelRotate labelEdit"), ["|", 13.5],
  ...S("database"), ["|", 16], ...S("python"), ["|", 13.5], ...S("cross topo georef"), ["|", 13],
  ...S("webAdd webFind"), ["", 25], ["|", 11], ...S("redo undo"),
];
const MENUS: [string, number][] = [
  ["Project", 49], ["Edit", 33], ["View", 37], ["Layer", 42], ["Settings", 54], ["Plugins", 48], ["Vector", 45],
  ["Raster", 47], ["Database", 61], ["Web", 36], ["Processing", 67], ["Help", 30],
];
const SIDE1 = "pencils pencil saveGrey addFeat curve moveFeat node trash scissors copy paste".split(" ");
const SIDE2 = "ruler magnet undoGrey redoGrey rotateFeat simplify addRing".split(" ");

interface Row { cells: string; icon: string; text: string; check?: boolean; bold?: boolean; on?: boolean; current?: boolean; }
/* cells: t = branch, l = last branch, i = trunk, - / + = expander, e = last expander, s = blank */
const LAYERS: Row[] = [
  { cells: "t", check: true, on: true, icon: "dot", text: "trajectory copy copy", bold: true, current: true },
  { cells: "t", check: true, on: true, icon: "thick", text: "trajectory copy", bold: true },
  { cells: "-", check: true, icon: "pages", text: "data" },
  { cells: "i-", check: true, icon: "pages", text: "final" },
  { cells: "iit", check: true, icon: "ring", text: "group_centers", bold: true },
  { cells: "iil", check: true, icon: "blueLine", text: "flow_lines", bold: true },
  { cells: "i-", check: true, icon: "pages", text: "intermediate" },
  { cells: "iil", check: true, icon: "speck", text: "characteristic_pts", bold: true },
  { cells: "ie", check: true, icon: "pages", text: "raw" },
  { cells: "isl", check: true, icon: "slateLine", text: "trajectory", bold: true },
  { cells: "e", check: true, on: true, icon: "tiles", text: "Dark Matter", bold: true },
];
const BROWSER: Row[] = [
  { cells: "+", icon: "folder", text: "Home" },
  { cells: "+", icon: "starIcon", text: "Favourites" },
  { cells: "+", icon: "folder", text: "C:/" },
  { cells: "t", icon: "folder", text: "D:/" },
  { cells: "+", icon: "folder", text: "E:/" },
  { cells: "+", icon: "folder", text: "F:/" },
  { cells: "+", icon: "folder", text: "G:/" },
  { cells: "t", icon: "db2", text: "DB2" },
  { cells: "t", icon: "mssql", text: "MSSQL" },
  { cells: "t", icon: "oracle", text: "Oracle" },
  { cells: "-", icon: "elephant", text: "PostGIS" },
  { cells: "i+", icon: "link", text: "geolife" },
  { cells: "ie", icon: "link", text: "Local GIS DB" },
  { cells: "is-", icon: "cylinder", text: "ais" },
  { cells: "isit", icon: "points", text: "broadcast" },
  { cells: "isii", icon: "pointsTop", text: "" },
];

const caret = (cls = "") => html`<i class="caret ${cls}"></i>`;
const cell = (k: string) => {
  const down = k === "l" || k === "e" ? 8 : 16;
  const box = "+-e".includes(k);
  return html`<svg class="cell" width="20" height="16">
    ${k === "s" ? nothing : svg`<path d="M10.500 0V${down}" stroke="#8c8c8c" stroke-dasharray="1 1"/>`}
    ${"tl+-e".includes(k) ? svg`<path d="M11 7.500H21" stroke="#8c8c8c" stroke-dasharray="1 1"/>` : nothing}
    ${box ? svg`<rect x="5.500" y="3.500" width="8" height="8" fill="#fff" stroke="#858585"/><path d="M7 7.500h5${k === "+" ? "M9.500 5v5" : ""}" stroke="#333"/>` : nothing}
  </svg>`;
};
const checkbox = (on = false) => html`<span class="chk ${on ? "on" : ""}"><svg width="11" height="11" viewBox="0 0 11 11">${
  on ? svg`<path d="M2 2l7 7M9 2L2 9" stroke="#000" stroke-width="3"/>` : nothing}</svg></span>`;
const treeRow = (r: Row) => html`<div class="trow ${r.current ? "current" : ""}">
  ${[...r.cells].map(cell)}${r.check ? checkbox(r.on) : nothing}
  <span class="ticon"><q-icon name=${r.icon} size="16"></q-icon></span>
  <span class="tlabel ${r.bold ? "bold" : ""} ${r.current ? "under" : ""}">${r.text}</span></div>`;
const dockButtons = html`<span class="dbtn"><svg width="11" height="11"><path d="M3.500 1.500h6v5h-6zM3.500 2.500h6M1.500 4.500h6v5h-6zM1.500 5.500h6" fill="#efefef" stroke="#000" stroke-width="1.200"/></svg></span><span class="dbtn"><svg width="11" height="11"><path d="M2 2l7 7M9 2L2 9" stroke="#000" stroke-width="1.500"/></svg></span>`;
const dockTitle = (t: string) => html`<div class="dtitle"><i class="dots"></i><span>${t}</span><i class="dots"></i>${dockButtons}</div>`;
const spin = (cls: string, v: string) => html`<div class="field ${cls}"><span>${v}</span><div class="spin"><b><i class="caret up"></i></b><b><i class="caret small"></i></b></div></div>`;

@customElement("app-root")
class AppRoot extends LitElement {
  static styles = css`
    :host { display: block; width: 1020px; height: 829px; overflow: hidden; background: #efefef; color: #1c1c1c;
      font: 11px/16px "DejaVu Sans Condensed", "DejaVu Sans", sans-serif; font-stretch: condensed; letter-spacing: -.2px; }
    * { box-sizing: border-box; }
    .shell { display: grid; grid-template-columns: 1020px; grid-template-rows: 29px 22px 38px 40px 674px 26px; height: 829px; white-space: nowrap; }
    .title { background: #fff; display: flex; align-items: center; padding: 0 16px 4px 6px; gap: 4px; font: 12px "Open Sans", sans-serif; letter-spacing: -.42px; color: #7c8a80; }
    .title .sp { flex: 1; }
    .title svg.win { margin-left: 29px; }
    .menu { display: flex; align-items: center; padding: 2px 0 0 7px; border-bottom: 1px solid #c4c4c4; }
    .bar { display: flex; align-items: center; border-bottom: 1px solid #bdbdbd; border-top: 1px solid #fafafa; }
    .bar > .more { margin: 0 2px 0 auto; }
    .slot { display: flex; flex: none; justify-content: center; align-items: center; height: 33px; }
    .slot.l { justify-content: flex-start; overflow: visible; }
    .slot.pressed { border: 1px solid #979797; border-radius: 3px; background: #dedede; }
    .grip { width: 6px; height: 30px; background-image: radial-gradient(circle at 1px 1px, #bbb .8px, transparent 1.2px), radial-gradient(circle at 4px 3px, #bbb .8px, transparent 1.2px); background-size: 6px 5px; }
    .caret { display: block; flex: none; width: 0; height: 0; border: 5px solid transparent; border-top-color: #000; border-bottom: 0; }
    .caret.grey { border-top-color: #999; }
    .caret.small { border-width: 4px 4px 0; }
    .caret.up { border: 4px solid transparent; border-bottom-color: #000; border-top: 0; }
    .more { font: 700 13px/14px "DejaVu Sans", sans-serif; color: #000; }
    .main { display: grid; grid-template-columns: 217px 8px 742px 53px; }
    .split { border-right: 1px solid #c4c8c6; background: radial-gradient(circle at 3px 2px, #bbb .9px, transparent 1.2px) 0 220px / 6px 5px repeat-y; background-size: 6px 5px; background-clip: content-box; padding: 220px 0 374px; }
    .left { display: grid; grid-template-rows: 20px 31px 316px 8px 15px 35px 246px 3px; }
    .dtitle { display: flex; align-items: center; gap: 2px; padding-right: 1px; font-size: 10px; letter-spacing: -.1px; }
    .left .dtitle { padding-bottom: 1px; }
    .dtitle span:not(.dbtn) { padding: 1px 9px 0; }
    .dots { flex: 1; height: 5px; background: radial-gradient(circle at 1px 3px, #bbb .7px, transparent 1.1px), radial-gradient(circle at 4px 1px, #bbb .7px, transparent 1.1px); background-size: 6px 5px; }
    .dbtn { width: 13px; height: 13px; border: 1px solid #777; border-radius: 3px; display: grid; place-items: center; background: #f5f5f5; }
    .ltools { display: flex; align-items: center; padding: 0 0 0 0.5px; }
    .ltools .slot { height: 24px; }
    .list { background: #fff; border: 1px solid #b5b5b5; border-left: 0; border-radius: 0 3px 3px 0; overflow: hidden; }
    .layers { padding-top: 1px; }
    .trow { display: flex; align-items: center; height: 16px; }
    .trow.current { background: #f0f0f0; }
    .cell { flex: none; display: block; }
    .chk { width: 13px; height: 13px; margin: 0 4px 0 3px; border: 1px solid #c9c9c9; background: #fcfcfc; display: grid; place-items: center; flex: none; }
    .chk.on { border-color: #bbb; }
    .ticon { width: 20px; display: flex; justify-content: center; flex: none; }
    .tlabel { margin-left: 4px; padding-top: 2px; }
    .tlabel.bold { font-weight: 700; letter-spacing: .19px; color: #000; }
    .tlabel.under { text-decoration: underline; margin-left: 2px; }
    .hsplit { display: flex; align-items: center; justify-content: center; }
    .hsplit i { flex: none; width: 67px; height: 4px; }
    .browser { display: grid; grid-template-columns: 1fr 17px; }
    .browser .rows { overflow: hidden; height: 244px; padding-top: 1px; }
    .browser .ticon { width: 22px; }
    .browser .tlabel { margin-left: 2px; }
    .scroll { display: grid; grid-template-rows: 17px 4px 78px 1fr 16px 16px; background: #f4f4f4; border-left: 1px dotted #ccc; }
    .sb { border: 1px solid #888; border-radius: 3px; background: linear-gradient(90deg, #fff, #e5e5e5); display: grid; place-items: center; }
    .sb i.tex { width: 11px; height: 18px; background: radial-gradient(circle at 1px 1px, #aaa .8px, transparent 1.100px) 0 0 / 4px 4px; }
    .center { display: grid; grid-template-rows: 2px 541px 9px 15px 1fr; border-bottom: 0; }
    .center .hsplit i { width: 246px; }
    .time { display: grid; grid-template-rows: 28px 33px 20px; padding-top: 13px; align-content: start; }
    .trow1 { display: flex; align-items: center; padding: 0 8px 0 7px; }
    .btn { height: 23px; width: 75px; border: 1px solid #a8a8a8; border-radius: 3px; background: linear-gradient(#fff, #e6e6e6); display: grid; place-items: center; flex: none; }
    .btn.b1 { margin-left: 5px; } .btn.b2 { margin: 0 6px; }
    .lab { flex: none; overflow: visible; padding-top: 1px; }
    .w89 { width: 88px; } .w84 { width: 84px; }
    .field { display: flex; height: 20px; border: 1px solid #a9a9a9; border-radius: 3px; background: #fff; align-items: center; padding-left: 4px; flex: none; overflow: hidden; }
    .field > span { flex: 1; padding-top: 1px; }
    .spin { width: 16px; height: 100%; border-left: 1px solid #aaa; display: grid; grid-template-rows: 1fr 1fr; background: #f1f1f1; flex: none; }
    .spin b { display: grid; place-items: center; } .spin b + b { border-top: 1px solid #bbb; }
    .f-start { width: 155px; margin-right: 7px; } .f-size { width: 84px; margin-right: 7px; }
    .f-hours { width: 93px; background: linear-gradient(#fcfcfc, #e7e7e7); }
    .drop { width: 16px; height: 100%; border-left: 1px solid #aaa; display: grid; place-items: center; flex: none; }
    .slider { display: flex; align-items: center; padding: 0 7px 0 6px; height: 33px; }
    .track { display: flex; align-items: center; width: 679px; height: 5px; border: 1px solid #999; border-radius: 2px; background: #f7f7f7; margin: 0 9px 0 16px; }
    .handle { display: block; flex: none; }
    .foot { display: flex; align-items: center; padding: 1px 29px 0 7px; gap: 12px; }
    .foot span:last-child { margin-left: auto; letter-spacing: -.15px; }
    .right { border-left: 1px solid #d2d2d2; margin-left: 2px; display: flex; flex-direction: column; align-items: center; height: 672px; }
    .right .item { width: 51px; height: 34px; padding-bottom: 1px; display: flex; align-items: center; justify-content: center; flex: none; }
    .right .item.drop1 { padding-left: 8px; }
    .right .dots { width: 42px; flex: none; height: 5px; margin: 3px 0 3px; }
    .right .item + .dots { margin-top: 7px; }
    .right .more { margin-top: 19px; transform: rotate(90deg); font-size: 12px; }
    .status { display: flex; align-items: center; height: 26px; padding-top: 1px; }
    .status a { color: #1a25c8; text-decoration: underline; width: 171px; flex: none; letter-spacing: -.27px; }
    .clip { overflow: hidden; display: flex; justify-content: center; flex: none; }
    .c1 { width: 44px; margin-right: 3px; } .c2 { width: 36px; margin: 0 3px 0 14px; } .c3 { width: 33px; margin: 0 8px 0 9px; }
    .f-coord { width: 124px; padding: 0 14px 0 0; text-align: right; margin-right: 5px; }
    .f-scale { width: 86px; margin: 0 4px 0 3px; } .f-mag { width: 76px; } .f-rot { width: 76px; margin-right: 4px; }
    .scale { margin-left: 13px; }
    .lockicon { margin-right: -1px; }
    .render { width: 53px; } .epsg { margin: 0 19px 0 3px; width: 86px; }
    .sizegrip { margin-left: auto; align-self: flex-end; }
  `;

  slot_(s: Slot) {
    const [n, w] = s;
    const style = `width:${w}px`;
    if (n === "|") return html`<span class="slot" style=${style}><i class="grip"></i></span>`;
    if (n === "v") return html`<span class="slot l" style=${style}>${caret()}</span>`;
    if (n === "g") return html`<span class="slot l" style=${style}>${caret("grey")}</span>`;
    return html`<span class="slot ${n === "identify" ? "pressed" : ""}" style=${style}><q-icon name=${n}></q-icon></span>`;
  }
  small(n: string, w = 27) {
    return html`<span class="slot" style=${`width:${w}px`}><q-icon name=${n} size="16"></q-icon></span>`;
  }

  render() {
    return html`<div class="shell">
      <div class="title"><q-icon name="qgis" size="17"></q-icon><span>QGIS 2.18.13 - ais</span><span class="sp"></span>
        <svg class="win" width="12" height="12"><path d="M0 6.500h11" stroke="#888"/></svg>
        <svg class="win" width="12" height="12"><path d="M1.500 1.500h9v9h-9z" fill="none" stroke="#888"/></svg>
        <svg class="win" width="12" height="12"><path d="M1 1l10 10M11 1L1 11" stroke="#888"/></svg>
      </div>
      <div class="menu">${MENUS.map(([m, w]) => html`<span style=${`width:${w}px`}>${m}</span>`)}</div>
      <div class="bar">${BAR1.map((s) => this.slot_(s))}<span class="more">»</span></div>
      <div class="bar">${BAR2.map((s) => this.slot_(s))}</div>

      <div class="main">
        <div class="left">
          ${dockTitle("Layers Panel")}
          <div class="ltools">${this.small("brush")}${this.small("group")}${this.small("eye")}${this.small("funnel")}${this.small("epsilon")}
            ${caret()}<span class="slot" style="width:3px"></span>${this.small("expand")}${this.small("collapse", 27)}<span class="more">»</span></div>
          <div class="list layers">${LAYERS.map(treeRow)}</div>
          <div class="hsplit"><i class="dots"></i></div>
          ${dockTitle("Browser Panel")}
          <div class="ltools">${["addSel", "sync", "funnel", "collapse", "info"].map((n) => this.small(n))}</div>
          <div class="list browser">
            <div class="rows">${BROWSER.map(treeRow)}</div>
            <div class="scroll"><div class="sb"><i class="caret up"></i></div><span></span><div class="sb"><i class="tex"></i></div><span></span>
              <div class="sb"><i class="caret up"></i></div><div class="sb"><i class="caret small"></i></div></div>
          </div>
        </div>
        <div class="split"></div>
        <div class="center">
          <span></span>
          <map-canvas></map-canvas>
          <div class="hsplit"><i class="dots"></i></div>
          ${dockTitle("Time Manager")}
          <div class="time">
            <div class="trow1">
              <q-icon name="power" size="18"></q-icon><span class="slot" style="width:25px"><q-icon name="museum" size="18"></q-icon></span>
              <span class="btn b1">Settings</span><span class="btn b2">Export Video</span>
              <span class="lab w89">Time frame start:</span>${spin("f-start", "2014-01-13 00:00:00.000")}
              <span class="lab w84">Time frame size:</span>${spin("f-size", "1")}
              <div class="field f-hours"><span>hours</span><div class="drop">${caret("small")}</div></div>
            </div>
            <div class="slider"><q-icon name="rewind" size="13"></q-icon>
              <div class="track"><svg class="handle" style=${`margin-left:${(0.583 * 679).toFixed(1)}px`} width="12" height="16"><path d="M1.500 1.500h9v9l-4.500 4-4.500-4z" fill="#f4f4f4" stroke="#777"/></svg></div>
              <q-icon name="forward" size="13"></q-icon></div>
            <div class="foot"><q-icon name="play" size="16"></q-icon><span>2014-01-07 16:33:08</span><span>2014-01-16 13:59:20</span></div>
          </div>
        </div>
        <div class="right">
          <i class="dots"></i>
          ${SIDE1.map((n) => n === "curve"
            ? html`<div class="item drop1"><q-icon name=${n} size="22"></q-icon>${caret("grey")}</div>`
            : html`<div class="item"><q-icon name=${n} size="22"></q-icon></div>`)}
          <i class="dots"></i>
          ${SIDE2.map((n) => html`<div class="item"><q-icon name=${n} size="23"></q-icon></div>`)}
          <span class="more">»</span>
        </div>
      </div>

      <div class="status">
        <a>There is a plugin update available</a>
        <span class="clip c1">Coordinate:</span><div class="field f-coord"><span>-7924550,4744261</span></div>
        <q-icon name="mouse" size="17"></q-icon><span class="scale">Scale</span>
        <div class="field f-scale"><span>1:4 622 324</span><div class="drop">${caret("small")}</div></div>
        <q-icon class="lockicon" name="lock" size="17"></q-icon>
        <span class="clip c2">Magnifier</span>${spin("f-mag", "100%")}
        <span class="clip c3">Rotation</span>${spin("f-rot", "0,0")}
        ${checkbox(true)}<span class="render">Render</span>
        <q-icon name="crs" size="17"></q-icon><span class="epsg">EPSG:3857 (OTF)</span>
        <q-icon name="bubble" size="17"></q-icon>
        <svg class="sizegrip" width="12" height="12"><path d="M1 12L12 1M5 12l7-7M9 12l3-3" stroke="#999"/></svg>
      </div>
    </div>`;
  }
}
